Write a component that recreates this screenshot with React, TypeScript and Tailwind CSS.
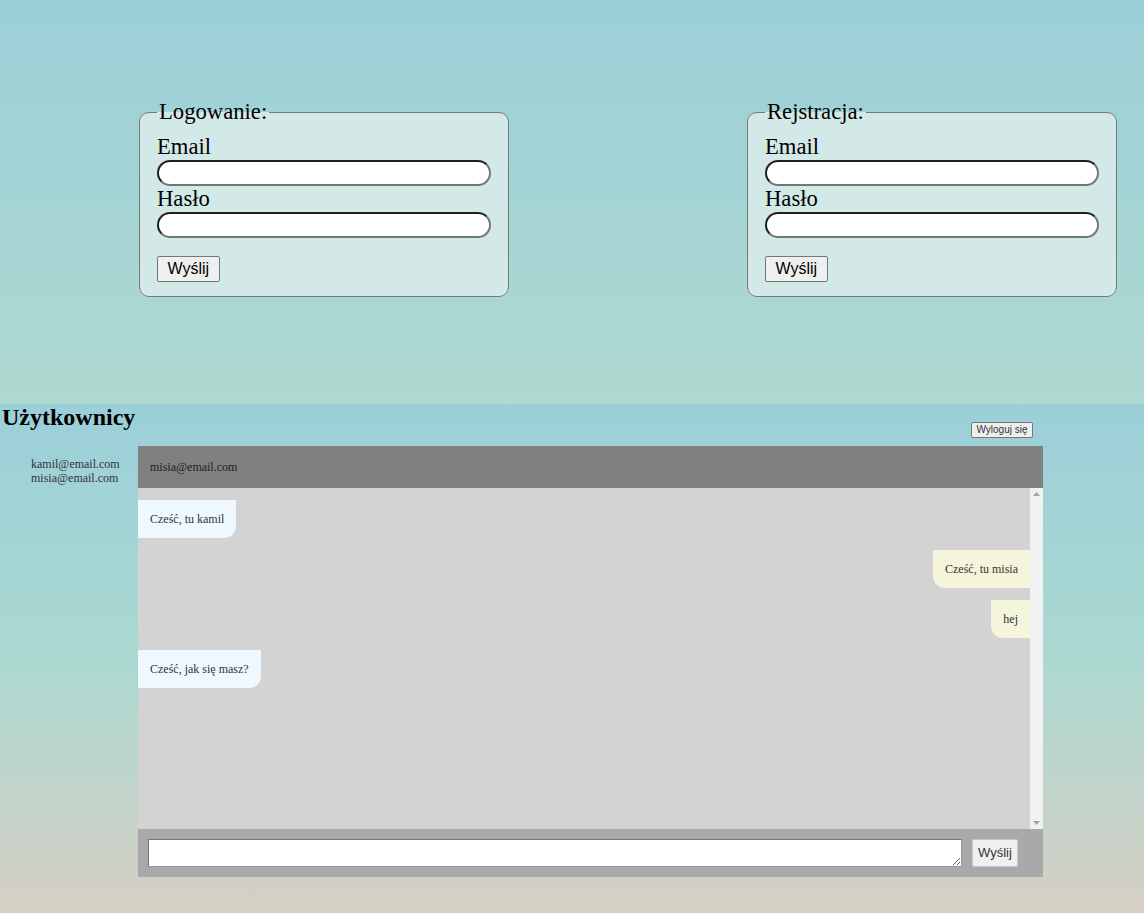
import React from "react";

const serif = "font-['Liberation_Serif',serif]";
const sans = "font-['Liberation_Sans',Arial,sans-serif]";

const inputCls =
  "block w-full h-[26px] rounded-full bg-white border-2 border-t-[#1e1e1e] border-l-[#1e1e1e] border-b-[#767676] border-r-[#767676] px-3 outline-none";

const AuthForm: React.FC<{ title: string }> = ({ title }) => (
  <fieldset
    className={`w-[370px] rounded-[10px] border border-[#777] bg-[#d3e9e8] px-[17px] pt-[9px] pb-[14px] text-[22.67px] leading-[26px] text-black ${serif}`}
  >
    <legend className="px-[2px]">{title}</legend>
    <label className="block">Email</label>
    <input type="text" className={inputCls} />
    <label className="block">Hasło</label>
    <input type="password" className={inputCls} />
    {/* submit */}
    <button
      className={`mt-[18px] block h-[26px] rounded-[2px] border border-[#767676] bg-[#efefef] px-[9.5px] text-[16px] leading-none text-black ${sans}`}
    >
      Wyślij
    </button>
  </fieldset>
);

type Msg = { text: string; mine: boolean };

const messages: Msg[] = [
  { text: "Cześć, tu kamil", mine: false },
  { text: "Cześć, tu misia", mine: true },
  { text: "hej", mine: true },
  { text: "Cześć, jak się masz?", mine: false },
];

export default function App() {
  return (
    <div className={`w-[1144px] ${serif}`}>
      {/* Login / register */}
      <div className="flex h-[404px] items-start bg-gradient-to-b from-[#9bcfd8] to-[#aed9d0] pl-[139px] pt-[99px]">
        <AuthForm title="Logowanie:" />
        <div className="ml-[238px]">
          <AuthForm title="Rejstracja:" />
        </div>
      </div>

      {/* Chat */}
      <div className="flex h-[509px] bg-[linear-gradient(to_bottom,#9bcfd9_0%,#abd9d1_50%,#d6cfc4_100%)]">
        <div className="w-[138px] shrink-0">
          <h2 className="pl-[2px] text-[24px] font-bold leading-[27px] text-black">Użytkownicy</h2>
          <ul className="mt-[26px] pl-[31px] text-[12px] leading-[14px] text-[#333]">
            <li>kamil@email.com</li>
            <li>misia@email.com</li>
          </ul>
        </div>

        <div className="w-[905px] shrink-0">
          <div className="flex justify-end pt-[18px] pr-[10px]">
            <button
              className={`h-[16px] rounded-[2px] border border-[#767676] bg-[#efefef] px-[4.5px] text-[10px] leading-none text-[#333] ${sans}`}
            >
              Wyloguj się
            </button>
          </div>

          <div className="mt-[8px]">
            <div className="flex h-[42px] items-center bg-[#808080] pl-[12px] text-[12px] text-[#222]">
              misia@email.com
            </div>

            <div className="flex h-[341px] bg-[#d3d3d3]">
              <div className="flex-1">
                {messages.map((m, i) => (
                  <div key={i} className={`mt-[12px] flex ${m.mine ? "justify-end" : "justify-start"}`}>
                    <div
                      className={`flex h-[38px] items-center px-[12px] text-[12px] text-[#333] ${
                        m.mine ? "rounded-bl-[12px] bg-[#f5f5dc]" : "rounded-br-[12px] bg-[#f0f8ff]"
                      }`}
                    >
                      {m.text}
                    </div>
                  </div>
                ))}
              </div>
              {/* scrollbar */}
              <div className="flex w-[13px] flex-col items-center justify-between bg-[#f1f1f1] py-[4px]">
                <svg width="7" height="4" viewBox="0 0 7 4">
                  <path d="M3.5 0L7 4H0z" fill="#a3a3a3" />
                </svg>
                <svg width="7" height="4" viewBox="0 0 7 4">
                  <path d="M0 0h7L3.5 4z" fill="#a3a3a3" />
                </svg>
              </div>
            </div>

            <div className="flex h-[48px] items-center bg-[#a9a9a9] pl-[10px]">
              <textarea className="h-[28px] w-[814px] border border-t-[#767676] border-l-[#767676] border-b-[#999] border-r-[#999] bg-white outline-none" />
              <button
                className={`ml-[10px] h-[28px] w-[46px] rounded-[2px] border border-[#c8c8c8] bg-[#efefef] text-[13px] text-[#333] ${sans}`}
              >
                Wyślij
              </button>
            </div>
          </div>
        </div>
      </div>
    </div>
  );
}
